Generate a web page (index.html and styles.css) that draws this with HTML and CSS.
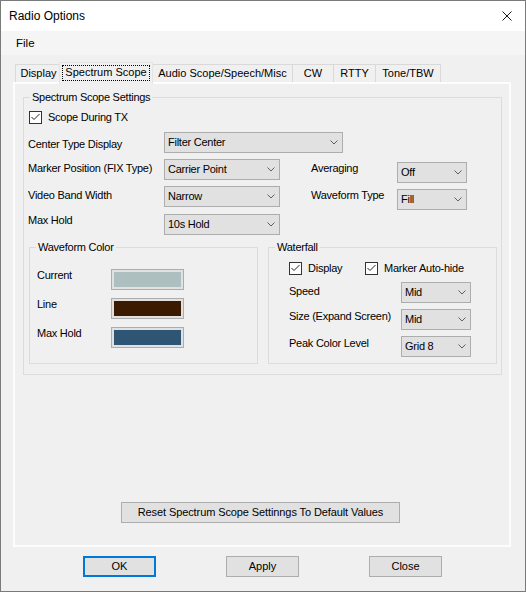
FILE: index.html
```html
<!DOCTYPE html>
<html lang="en">

<head>
  <meta charset="UTF-8">
  <title>Radio Options</title>
  <link rel="stylesheet" href="styles.css">
</head>

<body>
  <div class="window">

    <!-- Title bar -->
    <div class="titlebar">
      <span class="title">Radio Options</span>
      <svg class="close-x" width="10" height="10" viewBox="0 0 10 10">
        <path d="M0.5 0.5 L9.5 9.5 M9.5 0.5 L0.5 9.5" stroke="#1a1a1a" stroke-width="1" fill="none" />
      </svg>
    </div>

    <!-- Menu -->
    <div class="menubar">
      <span class="menu-item">File</span>
    </div>

    <!-- Tabs -->
    <div class="tabs">
      <div class="tab tab-display">Display</div>
      <div class="tab tab-selected tab-spectrum"><span class="focus">Spectrum Scope</span></div>
      <div class="tab tab-audio">Audio Scope/Speech/Misc</div>
      <div class="tab tab-cw">CW</div>
      <div class="tab tab-rtty">RTTY</div>
      <div class="tab tab-tone">Tone/TBW</div>
    </div>

    <div class="tab-page">
      <fieldset class="group group-main">
        <legend>Spectrum Scope Settings</legend>

        <div class="check check-tx">
          <span class="box">
            <svg width="11" height="11" viewBox="0 0 11 11"><path d="M1.5 5 L4 7.5 L9.5 2" stroke="#222" stroke-width="1" fill="none" /></svg>
          </span>
          <span>Scope During TX</span>
        </div>

        <div class="settings-grid">
          <span class="field-label drop-6">Center Type Display</span>
          <div class="combo combo-wide">
            <span>Filter Center</span>
            <svg width="8" height="5" viewBox="0 0 8 5"><path d="M0.5 0.5 L4 4 L7.5 0.5" stroke="#606060" fill="none" /></svg>
          </div>

          <span class="field-label drop-3">Marker Position (FIX Type)</span>
          <div class="combo combo-mid">
            <span>Carrier Point</span>
            <svg width="8" height="5" viewBox="0 0 8 5"><path d="M0.5 0.5 L4 4 L7.5 0.5" stroke="#606060" fill="none" /></svg>
          </div>
          <span class="field-label drop-3 col-right-label">Averaging</span>
          <div class="combo combo-small drop-3 col-right-combo">
            <span>Off</span>
            <svg width="8" height="5" viewBox="0 0 8 5"><path d="M0.5 0.5 L4 4 L7.5 0.5" stroke="#606060" fill="none" /></svg>
          </div>

          <span class="field-label drop-3">Video Band Width</span>
          <div class="combo combo-mid">
            <span>Narrow</span>
            <svg width="8" height="5" viewBox="0 0 8 5"><path d="M0.5 0.5 L4 4 L7.5 0.5" stroke="#606060" fill="none" /></svg>
          </div>
          <span class="field-label drop-3 col-right-label">Waveform Type</span>
          <div class="combo combo-small drop-3 col-right-combo">
            <span>Fill</span>
            <svg width="8" height="5" viewBox="0 0 8 5"><path d="M0.5 0.5 L4 4 L7.5 0.5" stroke="#606060" fill="none" /></svg>
          </div>

          <span class="field-label">Max Hold</span>
          <div class="combo combo-mid">
            <span>10s Hold</span>
            <svg width="8" height="5" viewBox="0 0 8 5"><path d="M0.5 0.5 L4 4 L7.5 0.5" stroke="#606060" fill="none" /></svg>
          </div>
        </div>

        <div class="sub-groups">
          <!-- Waveform Color -->
          <fieldset class="group group-color">
            <legend>Waveform Color</legend>
            <div class="color-rows">
              <div class="color-row">
                <span class="color-label">Current</span>
                <span class="swatch"><span class="swatch-fill fill-current"></span></span>
              </div>
              <div class="color-row">
                <span class="color-label">Line</span>
                <span class="swatch"><span class="swatch-fill fill-line"></span></span>
              </div>
              <div class="color-row">
                <span class="color-label">Max Hold</span>
                <span class="swatch"><span class="swatch-fill fill-maxhold"></span></span>
              </div>
            </div>
          </fieldset>

          <!-- Waterfall -->
          <fieldset class="group group-waterfall">
            <legend>Waterfall</legend>
            <div class="check-row">
              <div class="check check-display">
                <span class="box">
                  <svg width="11" height="11" viewBox="0 0 11 11"><path d="M1.5 5 L4 7.5 L9.5 2" stroke="#222" stroke-width="1" fill="none" /></svg>
                </span>
                <span>Display</span>
              </div>
              <div class="check">
                <span class="box">
                  <svg width="11" height="11" viewBox="0 0 11 11"><path d="M1.5 5 L4 7.5 L9.5 2" stroke="#222" stroke-width="1" fill="none" /></svg>
                </span>
                <span>Marker Auto-hide</span>
              </div>
            </div>

            <div class="wf-rows">
              <div class="wf-row">
                <span class="wf-label drop-3">Speed</span>
                <div class="combo combo-small">
                  <span>Mid</span>
                  <svg width="8" height="5" viewBox="0 0 8 5"><path d="M0.5 0.5 L4 4 L7.5 0.5" stroke="#606060" fill="none" /></svg>
                </div>
              </div>
              <div class="wf-row">
                <span class="wf-label drop-1">Size (Expand Screen)</span>
                <div class="combo combo-small">
                  <span>Mid</span>
                  <svg width="8" height="5" viewBox="0 0 8 5"><path d="M0.5 0.5 L4 4 L7.5 0.5" stroke="#606060" fill="none" /></svg>
                </div>
              </div>
              <div class="wf-row">
                <span class="wf-label drop-1">Peak Color Level</span>
                <div class="combo combo-small">
                  <span>Grid 8</span>
                  <svg width="8" height="5" viewBox="0 0 8 5"><path d="M0.5 0.5 L4 4 L7.5 0.5" stroke="#606060" fill="none" /></svg>
                </div>
              </div>
            </div>
          </fieldset>
        </div>
      </fieldset>

      <button class="button button-reset">Reset Spectrum Scope Settinngs To Default Values</button>
    </div>

    <!-- Dialog buttons -->
    <div class="dialog-buttons">
      <button class="button button-default">OK</button>
      <button class="button">Apply</button>
      <button class="button">Close</button>
    </div>
  </div>
</body>

</html>
```

FILE: styles.css
```css
body {
  margin: 0;
  font-family: "Liberation Sans", Arial, sans-serif;
  font-size: 11px;
  line-height: 13px;
  color: #000;
}

.window {
  width: 526px;
  height: 592px;
  box-sizing: border-box;
  border: 1px solid #7a7a7a;
  background-color: #f0f0f0;
}

/* Title bar */
.titlebar {
  height: 30px;
  background-color: #fff;
  display: flex;
  align-items: center;
  justify-content: space-between;
  padding: 0 13px 0 8px;
}

.title {
  font-size: 12px;
  line-height: 14px;
}

.menubar {
  height: 24px;
  background-color: #f5f5f5;
  display: flex;
  align-items: center;
  padding-left: 15px;
}

.menu-item {
  font-size: 11.5px;
}

/* Tabs */
.tabs {
  display: flex;
  align-items: flex-end;
  height: 20px;
  margin: 7px 0 0 14px;
}

.tab {
  height: 18px;
  box-sizing: border-box;
  border: 1px solid #d9d9d9;
  border-bottom: none;
  margin-right: -1px;
  padding-top: 2px;
  text-align: center;
  background-color: #f0f0f0;
}

.tab-display { width: 45px; padding-left: 2px; }
.tab-spectrum { width: 94px; }
.tab-audio { width: 141px; }
.tab-cw { width: 42px; }
.tab-rtty { width: 43px; }
.tab-tone { width: 66px; }

.tab-selected {
  height: 22px;
  margin-bottom: -2px;
  padding: 2px 2px 0 2px;
  position: relative;
  z-index: 1;
  border-color: #e4e4e4;
}

.tab-selected .focus {
  display: block;
  height: 16px;
  box-sizing: border-box;
  border: 1px dotted #000;
  line-height: 13px;
}

.tab-page {
  margin-left: 12px;
  width: 498px;
  height: 465px;
  box-sizing: border-box;
  border: 2px solid #fdfdfd;
  background-color: #f0f0f0;
  letter-spacing: -0.25px;
}

/* Group boxes */
.group {
  margin: 0;
  padding: 0;
  min-width: 0;
  border: 1px solid #dcdcdc;
}

.group legend {
  margin-left: 6px;
  padding: 0 2px;
  line-height: 13px;
}

.group-main {
  margin: 7px 7px 0 8px;
  padding-bottom: 10px;
}

.check {
  display: flex;
  align-items: center;
  gap: 6px;
}

.check .box {
  width: 13px;
  height: 13px;
  box-sizing: border-box;
  border: 1px solid #333;
  background-color: #fff;
  display: flex;
}

.check-tx {
  margin: 7px 0 0 5px;
}

.settings-grid {
  display: grid;
  grid-template-columns: 136px 116px 31px 86px 70px;
  grid-template-rows: 27px 27px 28px 21px;
  margin: 8px 0 0 4px;
  align-items: start;
}

.field-label {
  grid-column: 1;
}

.col-right-label {
  grid-column: 4;
}

.col-right-combo {
  grid-column: 5;
}

.drop-1 { margin-top: 1px; }
.drop-3 { margin-top: 3px; }
.drop-6 { margin-top: 6px; }

.combo {
  height: 21px;
  box-sizing: border-box;
  border: 1px solid #adadad;
  background-color: #e1e1e1;
  display: flex;
  align-items: center;
  justify-content: space-between;
  padding: 0 4px 0 3px;
}

.combo-wide {
  grid-column: 2 / span 3;
  width: 179px;
}

.combo-mid {
  grid-column: 2;
  width: 116px;
}

.combo-small {
  width: 70px;
}

.sub-groups {
  display: flex;
  gap: 10px;
  margin: 6px 0 0 5px;
}

.group-color,
.group-waterfall {
  width: 229px;
  box-sizing: border-box;
}

.group-color {
  padding-bottom: 15px;
}

.color-rows {
  display: flex;
  flex-direction: column;
  gap: 8px;
  margin: 15px 0 0 7px;
}

.color-row {
  display: flex;
  height: 21px;
}

.color-label {
  width: 74px;
}

.swatch {
  width: 73px;
  height: 21px;
  box-sizing: border-box;
  border: 1px solid #adadad;
  background-color: #e1e1e1;
  padding: 2px;
  display: flex;
}

.swatch-fill {
  flex: 1;
}

.fill-current { background-color: #adbfbf; }
.fill-line { background-color: #3a1a00; }
.fill-maxhold { background-color: #2e5674; }

.check-row {
  display: flex;
  margin: 8px 0 0 20px;
}

.check-display {
  width: 76px;
}

.wf-rows {
  display: flex;
  flex-direction: column;
  gap: 6px;
  margin: 7px 0 0 20px;
}

.wf-row {
  display: flex;
  align-items: flex-start;
  height: 21px;
}

.wf-label {
  width: 112px;
}

/* Buttons */
.button {
  height: 21px;
  width: 73px;
  box-sizing: border-box;
  border: 1px solid #adadad;
  background-color: #e1e1e1;
  font-family: inherit;
  font-size: 11px;
  line-height: 13px;
  padding: 0;
  color: #000;
}

.button-reset {
  width: 279px;
  margin: 127px 0 0 106px;
  display: block;
  letter-spacing: -0.1px;
}

.button-default {
  border: 2px solid #0078d7;
}

.dialog-buttons {
  display: flex;
  gap: 70px;
  margin: 9px 0 0 82px;
}
```
